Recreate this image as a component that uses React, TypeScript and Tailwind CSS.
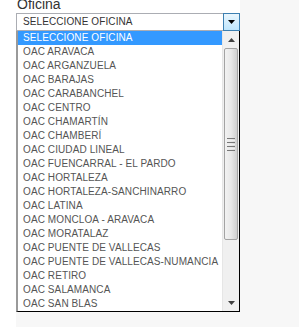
import React from "react";

const items = [
  "SELECCIONE OFICINA",
  "OAC ARAVACA",
  "OAC ARGANZUELA",
  "OAC BARAJAS",
  "OAC CARABANCHEL",
  "OAC CENTRO",
  "OAC CHAMARTÍN",
  "OAC CHAMBERÍ",
  "OAC CIUDAD LINEAL",
  "OAC FUENCARRAL - EL PARDO",
  "OAC HORTALEZA",
  "OAC HORTALEZA-SANCHINARRO",
  "OAC LATINA",
  "OAC MONCLOA - ARAVACA",
  "OAC MORATALAZ",
  "OAC PUENTE DE VALLECAS",
  "OAC PUENTE DE VALLECAS-NUMANCIA",
  "OAC RETIRO",
  "OAC SALAMANCA",
  "OAC SAN BLAS",
];

export default function App() {
  return (
    <div className="w-[299px] h-[327px] overflow-hidden bg-white font-['Liberation_Sans',Arial,sans-serif] flex">
      <div className="w-[240px] flex flex-col">
        <div className="h-[13px] pl-[17px] flex items-end">
          <span className="text-[14px] leading-none text-[#333] mb-[2px]">Oficina</span>
        </div>
        <div className="flex flex-1">
          <div className="w-[16px] bg-white" />
          <div className="relative w-[224px] flex flex-col">
            {/* select */}
            <div className="h-[18px] flex border border-[#abadb3] bg-white">
              <div className="flex-1 flex items-center pl-[6px] text-[10px] tracking-[0.1px] text-[#333] leading-none">
                SELECCIONE OFICINA
              </div>
              <div className="w-[17px] -m-px border border-[#3c7fb1] bg-gradient-to-b from-[#eaf6fd] to-[#bee6fd] flex items-center justify-center">
                <svg width="7" height="4" viewBox="0 0 7 4">
                  <path d="M0 0H7L3.5 4Z" fill="#000" />
                </svg>
              </div>
            </div>
            <div className="flex-1 bg-[#f7f7f7]" />
            {/* dropdown list */}
            <div className="absolute left-0 top-[18px] w-[224px] h-[281px] bg-white border-l-2 border-l-[#9a9a9a] border-r border-b border-r-black border-b-black flex">
              <div className="flex-1 flex flex-col">
                {items.map((it, i) => (
                  <div
                    key={it}
                    className={
                      i === 0
                        ? "h-[14px] flex items-center pl-[5px] text-[10px] tracking-[0.1px] leading-none bg-[#3399ff] text-white whitespace-nowrap"
                        : "h-[14px] flex items-center pl-[5px] text-[10px] tracking-[0.1px] leading-none text-[#555] whitespace-nowrap"
                    }
                  >
                    {it}
                  </div>
                ))}
              </div>
              {/* scrollbar */}
              <div className="w-[17px] bg-[#f0f0f0] border-l border-l-[#e6e6e6] flex flex-col">
                <div className="h-[17px] flex items-center justify-center">
                  <svg width="7" height="4" viewBox="0 0 7 4">
                    <path d="M3.5 0L7 4H0Z" fill="#404040" />
                  </svg>
                </div>
                <div className="h-[192px] mx-px rounded-[2px] border border-[#a3a3a3] bg-gradient-to-r from-[#f2f2f2] via-[#e8e8e8] to-[#cfcfcf] flex flex-col items-center justify-center gap-[1px]">
                  <div className="w-[8px] h-px bg-[#777]" />
                  <div className="w-[8px] h-px bg-[#eee]" />
                  <div className="w-[8px] h-px bg-[#777]" />
                  <div className="w-[8px] h-px bg-[#eee]" />
                  <div className="w-[8px] h-px bg-[#777]" />
                  <div className="w-[8px] h-px bg-[#eee]" />
                  <div className="w-[8px] h-px bg-[#777]" />
                </div>
                <div className="flex-1" />
                <div className="h-[17px] flex items-center justify-center">
                  <svg width="7" height="4" viewBox="0 0 7 4">
                    <path d="M0 0H7L3.5 4Z" fill="#404040" />
                  </svg>
                </div>
              </div>
            </div>
          </div>
        </div>
      </div>
      <div className="flex-1 bg-[#f7f7f7]" />
    </div>
  );
}
